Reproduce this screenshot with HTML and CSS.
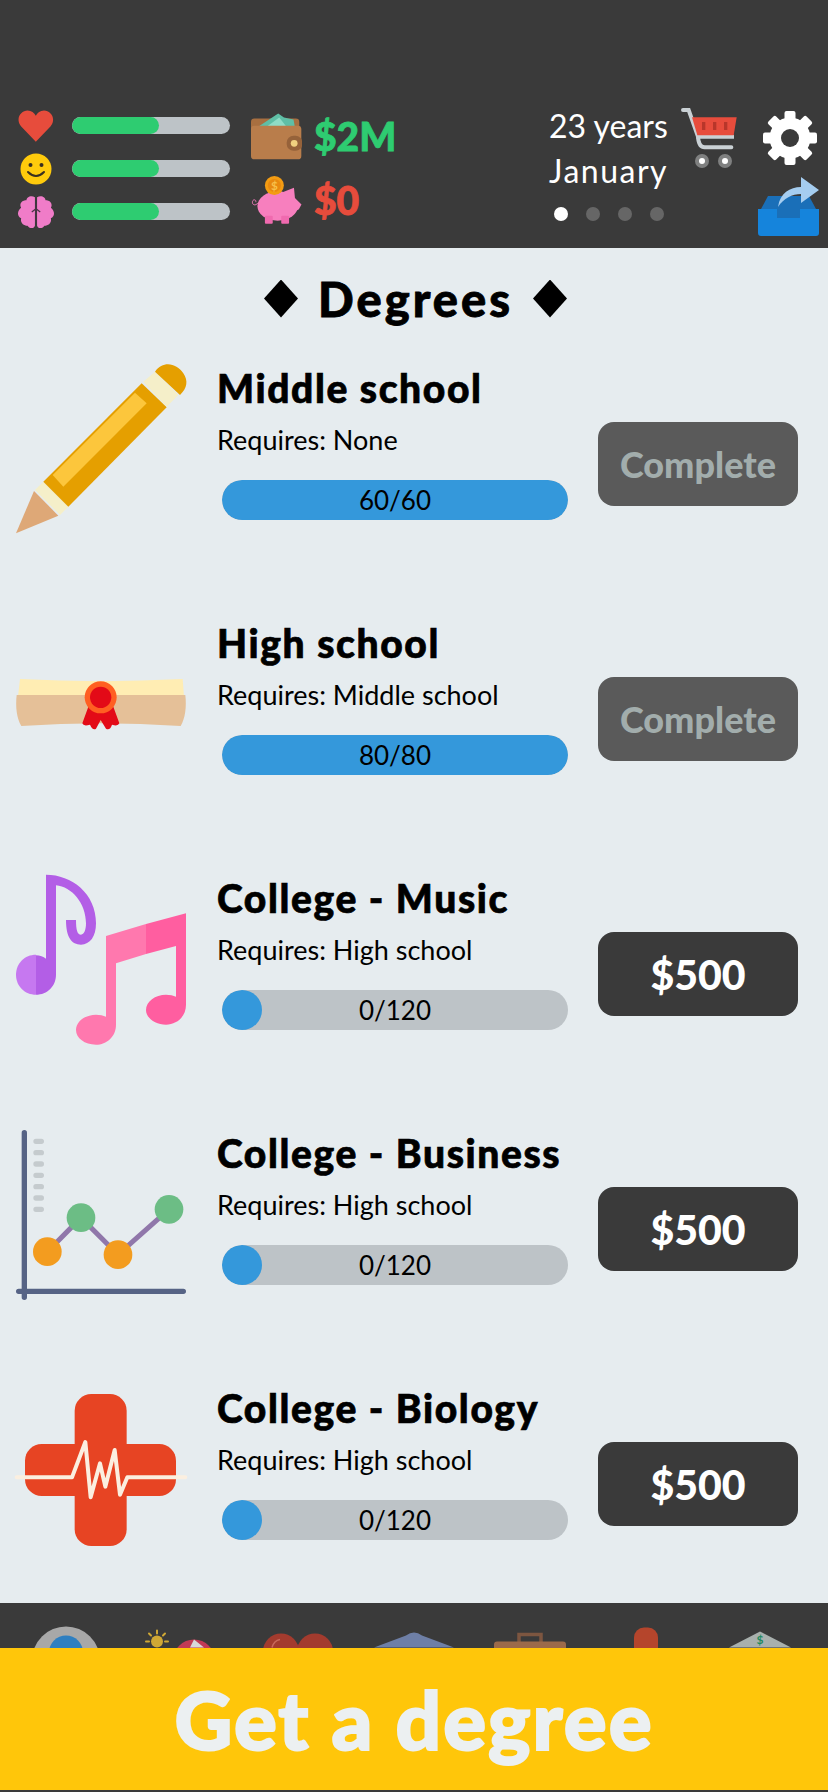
FILE: index.html
```html
<!DOCTYPE html>
<html lang="en">
<head>
  <meta charset="UTF-8">
  <title>Degrees</title>
  <link rel="stylesheet" href="styles.css">
</head>
<body>
  <header class="topbar">
    <div class="stats">
      <svg class="stat-icon" viewBox="58 65 97 85"><path fill="#e74c3c" d="M106 150 L66 108 C50 88 66 66 84 66 C94 66 102 72 106 80 C110 72 118 66 128 66 C146 66 162 88 146 108 Z"/></svg>
      <div class="meter"><div class="meter-fill"></div></div>
      <svg class="stat-icon" viewBox="0 0 32 32"><circle cx="16" cy="16" r="15.5" fill="#ffcb0c"/><circle cx="10.5" cy="12" r="2" fill="#3a3020"/><circle cx="21.5" cy="12" r="2" fill="#3a3020"/><path d="M8 19 Q16 27 24 19" fill="none" stroke="#3a3020" stroke-width="2" stroke-linecap="round"/></svg>
      <div class="meter"><div class="meter-fill"></div></div>
      <svg class="stat-icon" viewBox="1 1 34 30"><path fill="#f07cc8" d="M17 2 C13 0 9 2 9 5 C4 5 2 9 4 12 C0 15 0 20 4 22 C3 26 6 29 10 29 C12 32 16 32 17 29 Z M19 2 C23 0 27 2 27 5 C32 5 34 9 32 12 C36 15 36 20 32 22 C33 26 30 29 26 29 C24 32 20 32 19 29 Z"/><path d="M18 8 V26 M18 13 L14 16 M18 13 L22 16" fill="none" stroke="#4a3345" stroke-width="1.2"/></svg>
      <div class="meter"><div class="meter-fill"></div></div>
    </div>

    <div class="money">
      <div class="money-row">
        <svg class="money-icon" viewBox="755 70 150 137">
          <rect x="755" y="87" width="142" height="60" rx="10" fill="#a86f40"/>
          <path fill="#5fbfa6" d="M775 112 L835 72 L852 84 L880 90 L884 112 Z"/>
          <path fill="#8fdcc6" d="M800 112 L838 84 L860 112 Z"/>
          <rect x="755" y="108" width="148" height="99" rx="10" fill="#b97d4b"/>
          <rect x="860" y="138" width="46" height="44" rx="20" fill="#96623a"/>
          <circle cx="882" cy="160" r="10" fill="#f0d080"/>
        </svg>
        <span class="amount amount-cash">$2M</span>
      </div>
      <div class="money-row">
        <svg class="money-icon" viewBox="755 258 153 147">
          <path d="M775 340 C768 350 756 348 758 336 C760 328 770 330 768 338" fill="none" stroke="#e878b4" stroke-width="3"/>
          <ellipse cx="835" cy="350" rx="62" ry="45" fill="#f77fbe"/>
          <path fill="#f77fbe" d="M850 308 L885 294 L888 325 L908 345 L900 360 L880 372 L850 380 Z"/>
          <rect x="796" y="380" width="24" height="24" rx="3" fill="#f06aaf"/>
          <rect x="846" y="380" width="24" height="24" rx="3" fill="#f06aaf"/>
          <circle cx="825" cy="287" r="29" fill="#f39c12"/>
          <circle cx="825" cy="287" r="20" fill="#e8890f"/>
          <text class="coin-sign" x="825" y="300" text-anchor="middle">$</text>
        </svg>
        <span class="amount amount-debt">$0</span>
      </div>
    </div>

    <div class="date">
      <div class="date-line">23 years</div>
      <div class="date-line date-month">January</div>
      <div class="dots">
        <span class="dot dot-on"></span>
        <span class="dot"></span>
        <span class="dot"></span>
        <span class="dot"></span>
      </div>
    </div>

    <div class="tools">
      <div class="tools-top">
        <svg class="cart" viewBox="799 54 168 180"><path d="M805 60 H822 L850 140 Q852 172 870 172 H950" fill="none" stroke="#c9d0d4" stroke-width="12" stroke-linecap="round"/><path d="M845 140 H958" stroke="#c9d0d4" stroke-width="12"/><path fill="#e74c3c" d="M832 82 H966 L957 136 H848 Z"/><rect x="862" y="96" width="10" height="24" fill="#b8362a"/><rect x="895" y="96" width="10" height="24" fill="#b8362a"/><rect x="928" y="96" width="10" height="24" fill="#b8362a"/><circle cx="862" cy="213" r="21" fill="#7f8080"/><circle cx="862" cy="213" r="9" fill="#fff"/><circle cx="931" cy="213" r="21" fill="#7f8080"/><circle cx="931" cy="213" r="9" fill="#fff"/></svg>
        <svg class="gear" viewBox="-27 -27 54 54"><g fill="#fff"><rect x="-5.500" y="-27" width="11" height="54" rx="2"/><rect x="-5.500" y="-27" width="11" height="54" rx="2" transform="rotate(45)"/><rect x="-5.500" y="-27" width="11" height="54" rx="2" transform="rotate(90)"/><rect x="-5.500" y="-27" width="11" height="54" rx="2" transform="rotate(135)"/><circle r="20.500"/></g><circle r="9" fill="#3a3a3a"/></svg>
      </div>
      <svg class="share" viewBox="0 0 61 59"><path fill="#1a6fb8" d="M10 19 H51 L58 32 H3 Z"/><path fill="#1584dc" d="M0 32 H19 V41 H42 V32 H61 V56 Q61 59 58 59 H3 Q0 59 0 56 Z"/><rect x="19" y="32" width="23" height="9" fill="#1a6fb8"/><path fill="#a5cdf0" d="M20 30 C22 16 32 10 43 10 V0 L61 13 L43 26 V17 C34 17 26 21 20 30 Z"/></svg>
    </div>
  </header>

  <main class="content">
    <h1 class="page-title"><span class="diamond"></span>Degrees<span class="diamond"></span></h1>

    <section class="degree">
      <svg class="degree-icon" viewBox="48 39 510 510">
        <path fill="#dea877" d="M48 550 L102 423 L175 497 Z"/>
        <path fill="#f5efc9" d="M105 420 L130 395 L205 470 L180 495 Z"/>
        <path fill="#e59f00" d="M130 395 L425 100 L500 172 L205 470 Z"/>
        <path fill="#fcc63c" d="M158 375 L405 128 L440 160 L190 410 Z"/>
        <path fill="#f5efc9" d="M430 95 L465 65 L535 135 L500 170 Z"/>
        <path fill="#e59f00" d="M465 65 C490 30 530 40 550 70 C565 92 562 115 540 135 Z"/>
      </svg>
      <div class="degree-info">
        <h2 class="degree-name">Middle school</h2>
        <p class="degree-req">Requires: None</p>
        <div class="progress"><div class="progress-fill progress-full"></div><span class="progress-text">60/60</span></div>
      </div>
      <button class="degree-btn btn-done">Complete</button>
    </section>

    <section class="degree">
      <svg class="degree-icon" viewBox="48 804 510 510">
        <path fill="#ffedb3" d="M60 987 Q300 1000 548 987 L552 1040 H54 Z"/>
        <path fill="#e5c098" d="M50 1035 H556 C560 1070 556 1105 542 1128 Q300 1112 64 1128 C50 1105 46 1070 50 1035 Z"/>
        <path fill="#e30a17" d="M265 1070 L247 1120 Q250 1130 270 1124 Q278 1142 288 1136 L302 1110 L318 1136 Q330 1142 336 1124 Q354 1130 358 1120 L340 1070 Z"/>
        <circle cx="302" cy="1042" r="48" fill="#ff5f22"/>
        <circle cx="302" cy="1042" r="32" fill="#e30a17"/>
      </svg>
      <div class="degree-info">
        <h2 class="degree-name">High school</h2>
        <p class="degree-req">Requires: Middle school</p>
        <div class="progress"><div class="progress-fill progress-full"></div><span class="progress-text">80/80</span></div>
      </div>
      <button class="degree-btn btn-done">Complete</button>
    </section>

    <section class="degree">
      <svg class="degree-icon" viewBox="48 39 510 510">
        <path fill="#b35ee6" d="M138 44 C215 44 288 100 288 190 C288 230 270 254 243 254 C215 254 198 232 198 180 H228 C228 210 232 224 243 224 C252 224 258 210 258 190 C258 130 215 80 168 76 V344 C168 378 142 404 108 404 V286 C120 286 130 290 138 296 Z"/>
        <path fill="#c678f0" d="M108 284 C74 284 48 310 48 344 C48 378 74 404 108 404 Z"/>
        <path fill="#ff78ae" d="M318 228 L438 192 V282 L348 310 V494 C348 530 320 554 288 554 C254 554 228 534 228 510 C228 484 256 464 288 464 C300 464 310 466 318 470 Z"/>
        <path fill="#ff5ea0" d="M438 192 L558 160 V434 C558 470 530 494 498 494 C466 494 438 474 438 450 C438 424 466 404 498 404 C510 404 520 406 528 410 V258 L438 282 Z"/>
      </svg>
      <div class="degree-info">
        <h2 class="degree-name">College - Music</h2>
        <p class="degree-req">Requires: High school</p>
        <div class="progress"><div class="progress-fill progress-start"></div><span class="progress-text">0/120</span></div>
      </div>
      <button class="degree-btn">$500</button>
    </section>

    <section class="degree">
      <svg class="degree-icon" viewBox="48 804 510 510">
        <g stroke="#c5cbce" stroke-width="16" stroke-linecap="round"><path d="M108 844 H124 M108 878 H124 M108 912 H124 M108 946 H124 M108 980 H124 M108 1014 H124 M108 1048 H124"/></g>
        <path d="M142 1175 L243 1073 L354 1184 L507 1048" fill="none" stroke="#9077aa" stroke-width="15"/>
        <path d="M73 818 V1312 M56 1294 H550" fill="none" stroke="#566385" stroke-width="16" stroke-linecap="round"/>
        <circle cx="142" cy="1175" r="43" fill="#f39c1f"/>
        <circle cx="243" cy="1073" r="43" fill="#6cbd85"/>
        <circle cx="354" cy="1184" r="43" fill="#f39c1f"/>
        <circle cx="507" cy="1048" r="43" fill="#6cbd85"/>
      </svg>
      <div class="degree-info">
        <h2 class="degree-name">College - Business</h2>
        <p class="degree-req">Requires: High school</p>
        <div class="progress"><div class="progress-fill progress-start"></div><span class="progress-text">0/120</span></div>
      </div>
      <button class="degree-btn">$500</button>
    </section>

    <section class="degree">
      <svg class="degree-icon" viewBox="48 9 510 510">
        <rect x="224" y="42" width="156" height="456" rx="50" fill="#e74423"/>
        <rect x="75" y="192" width="453" height="156" rx="50" fill="#e74423"/>
        <path d="M50 292 H216 L256 186 L272 352 L300 250 L316 320 L344 210 L360 344 L382 292 H556" fill="none" stroke="#fbefe0" stroke-width="12" stroke-linejoin="round" stroke-linecap="round"/>
      </svg>
      <div class="degree-info">
        <h2 class="degree-name">College - Biology</h2>
        <p class="degree-req">Requires: High school</p>
        <div class="progress"><div class="progress-fill progress-start"></div><span class="progress-text">0/120</span></div>
      </div>
      <button class="degree-btn">$500</button>
    </section>
  </main>

  <footer class="bottom">
    <nav class="tabs">
      <svg class="tab" viewBox="0 0 80 21"><circle cx="40" cy="34" r="34" fill="#a8a8a8"/><circle cx="40" cy="26" r="17" fill="#2f7fc0"/></svg>
      <svg class="tab" viewBox="0 0 80 21"><circle cx="15" cy="15" r="6" fill="#d0a835"/><path d="M15 4 V7 M7 7 L9 9 M23 7 L21 9 M4 15 H7 M26 15 H23" stroke="#d0a835" stroke-width="2" stroke-linecap="round"/><circle cx="52" cy="34" r="21" fill="#c23a55"/><path d="M52 13 L62 21 H48 Z" fill="#d8d8d8"/></svg>
      <svg class="tab" viewBox="0 0 80 21"><circle cx="23" cy="25" r="18" fill="#a33b2e"/><circle cx="57" cy="25" r="18" fill="#a33b2e"/><path d="M14 21 Q16 14 22 13" fill="none" stroke="#c96a5c" stroke-width="1.500"/></svg>
      <svg class="tab" viewBox="0 0 80 21"><path d="M40 6 Q36 6 32 9 L0 21 H80 L48 9 Q44 6 40 6 Z" fill="#6e7fa6"/></svg>
      <svg class="tab" viewBox="0 0 80 21"><path d="M29 16 V8 H51 V16" fill="none" stroke="#7d5640" stroke-width="3.500"/><rect x="4" y="15" width="72" height="10" rx="3" fill="#9c6a4a"/></svg>
      <svg class="tab" viewBox="0 0 80 21"><rect x="28" y="1" width="24" height="40" rx="10" fill="#b5452c"/></svg>
      <svg class="tab" viewBox="0 0 80 21"><path d="M38 5 L7 21 H69 Z" fill="#a8b0ad"/><text class="tab-sign" x="38" y="17" text-anchor="middle">$</text></svg>
    </nav>

    <button class="cta">Get a degree</button>
  </footer>
</body>
</html>
```

FILE: styles.css
```css
* {
  box-sizing: border-box;
}

html, body {
  margin: 0;
  padding: 0;
}

body {
  width: 828px;
  height: 1792px;
  overflow: hidden;
  background-color: #e6ecef;
  font-family: Lato, "Open Sans", sans-serif;
  color: #000;
}

.topbar {
  height: 248px;
  padding: 104px 9px 0 18px;
  display: flex;
  align-items: flex-start;
  background-color: #3a3a3a;
}

.stats {
  width: 212px;
  display: grid;
  grid-template-columns: 36px 158px;
  grid-auto-rows: 43px;
  column-gap: 18px;
  align-items: center;
}

.stat-icon {
  width: 36px;
  height: 32px;
  justify-self: center;
}

.meter {
  height: 17px;
  border-radius: 9px;
  background-color: #bdc3c7;
  overflow: hidden;
}

.meter-fill {
  width: 55%;
  height: 100%;
  border-radius: 9px;
  background-color: #2ecc71;
}

.money {
  margin-left: 21px;
}

.money-row {
  height: 64px;
  display: flex;
  align-items: center;
  gap: 12px;
}

.money-icon {
  width: 51px;
  height: 48px;
}

.coin-sign {
  font-size: 36px;
  font-weight: 700;
  fill: #f7c04a;
}

.amount {
  font-size: 39px;
  font-weight: 900;
  -webkit-text-stroke: 0.8px currentColor;
}

.amount-cash {
  color: #2ecc71;
}

.amount-debt {
  color: #e74c3c;
}

.date {
  margin-left: auto;
  width: 118px;
  margin-top: -1px;
  color: #fff;
}

.date-line {
  height: 45px;
  line-height: 45px;
  font-size: 32px;
  text-align: right;
  white-space: nowrap;
}

.date-month {
  letter-spacing: 1.5px;
}

.dots {
  margin-top: 14px;
  padding-left: 5px;
  display: flex;
  gap: 18px;
}

.dot {
  width: 14px;
  height: 14px;
  border-radius: 50%;
  background-color: #666;
}

.dot-on {
  background-color: #fff;
}

.tools {
  width: 138px;
  margin-left: 14px;
  margin-top: 4px;
  display: flex;
  flex-direction: column;
}

.tools-top {
  display: flex;
  align-items: flex-start;
  gap: 26px;
}

.cart {
  width: 56px;
  height: 60px;
}

.gear {
  width: 54px;
  height: 54px;
  margin-top: 3px;
}

.share {
  width: 61px;
  height: 59px;
  margin-top: 9px;
  align-self: flex-end;
}

.content {
  height: 1355px;
  padding: 0 29px 0 16px;
}

.page-title {
  height: 115px;
  margin: 0 -16px 0 0;
  padding-bottom: 14px;
  display: flex;
  justify-content: center;
  align-items: center;
  gap: 20px;
  font-size: 47px;
  font-weight: 900;
  letter-spacing: 3px;
  -webkit-text-stroke: 0.8px #000;
}

.diamond {
  width: 34px;
  height: 38px;
  background-color: #000;
  clip-path: polygon(50% 0, 100% 50%, 50% 100%, 0 50%);
}

.degree {
  height: 170px;
  margin-bottom: 85px;
  display: flex;
  align-items: flex-start;
}

.degree-icon {
  width: 170px;
  height: 170px;
  flex-shrink: 0;
  overflow: visible;
}

.degree-info {
  width: 351px;
  margin-left: 31px;
  padding-top: 2px;
}

.degree-name {
  margin: 0;
  height: 46px;
  line-height: 46px;
  font-size: 39px;
  font-weight: 900;
  letter-spacing: 1.6px;
  white-space: nowrap;
  -webkit-text-stroke: 0.7px #000;
}

.degree-req {
  margin: 12px 0 0;
  height: 34px;
  line-height: 34px;
  font-size: 27px;
}

.progress {
  position: relative;
  width: 346px;
  height: 40px;
  margin: 23px 0 0 5px;
  border-radius: 20px;
  background-color: #bdc3c7;
  overflow: hidden;
}

.progress-fill {
  height: 100%;
  border-radius: 20px;
  background-color: #3498db;
}

.progress-full {
  width: 100%;
}

.progress-start {
  width: 40px;
}

.progress-text {
  position: absolute;
  inset: 0;
  line-height: 40px;
  text-align: center;
  font-size: 26px;
}

.degree-btn {
  width: 200px;
  height: 84px;
  margin: 59px 0 0 30px;
  padding: 0;
  border: none;
  border-radius: 16px;
  background-color: #3a3a3a;
  color: #fff;
  font-family: inherit;
  font-size: 41px;
  font-weight: 900;
}

.btn-done {
  background-color: #5a5a5a;
  color: #a2adac;
  font-size: 36px;
}

.bottom {
  height: 189px;
  background-color: #3a3a3a;
}

.tabs {
  height: 45px;
  padding: 23px 8px 0;
  display: flex;
  overflow: hidden;
}

.tab {
  width: 116px;
  height: 22px;
  padding: 0 18px;
  flex-shrink: 0;
}

.tab-sign {
  font-size: 12px;
  font-weight: 700;
  fill: #1f8a5f;
}

.cta {
  display: block;
  width: 100%;
  height: 142px;
  padding: 0;
  border: none;
  background-color: #ffc60a;
  color: #ecf0f1;
  font-family: inherit;
  font-size: 80px;
  font-weight: 900;
  letter-spacing: 2px;
  -webkit-text-stroke: 2px #ecf0f1;
}
```
